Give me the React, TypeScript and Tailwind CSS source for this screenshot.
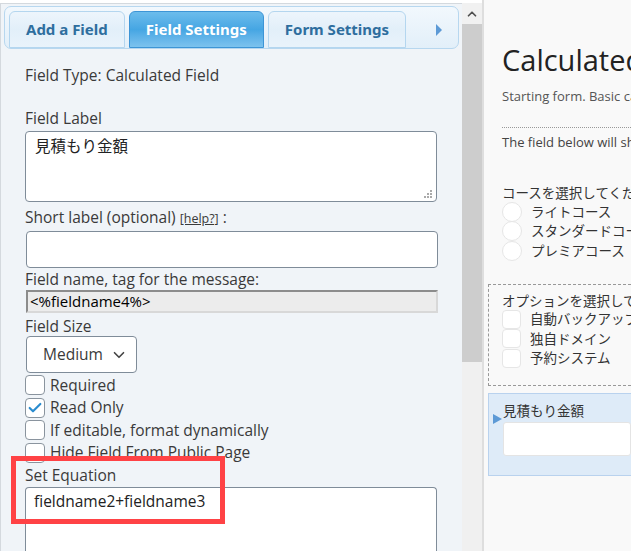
import { Check, ChevronDown, ChevronUp } from 'lucide-react';

const body = { fontFamily: '"Open Sans", "Noto Sans CJK JP", sans-serif' };

function CheckRow({ label, checked }: { label: string; checked?: boolean }) {
  return (
    <div className="flex h-[22.5px] items-center gap-[5px]">
      <span className="flex h-[20px] w-[20px] shrink-0 items-center justify-center rounded-[4px] border border-[#8a949e] bg-white">
        {checked && <Check className="h-[16px] w-[16px] text-[#2a8ccf]" strokeWidth={3.2} />}
      </span>
      <span className="text-[15.5px] text-[#3a3a3a]">{label}</span>
    </div>
  );
}

function Tab({ label, active }: { label: string; active?: boolean }) {
  return (
    <div
      className={
        active
          ? 'flex h-[37px] items-center justify-center rounded-t-[6px] border border-[#3d95d6] bg-gradient-to-b from-[#6cbcec] via-[#45a6e3] to-[#7cc2ee] px-[16px] text-[15px] font-bold text-white'
          : 'flex h-[37px] items-center justify-center rounded-t-[6px] border border-[#b4d6ef] bg-gradient-to-b from-[#edf5fc] via-[#e2eff9] to-[#e9f3fb] px-[16px] text-[15px] font-bold text-[#2e6e9e]'
      }
      style={{ fontFamily: '"Noto Sans", sans-serif' }}
    >
      {label}
    </div>
  );
}

function RightPanel() {
  return (
    <div className="flex-1 overflow-hidden bg-[#f9f9f9] pt-[41px]" style={body}>
      <div className="pl-[18px] whitespace-nowrap">
        <div className="text-[29px] leading-[38px] text-[#222]">Calculated Field</div>
        <div className="mt-[8px] text-[13px] leading-[18px] text-[#555]">Starting form. Basic calculation</div>
        <div className="mt-[22px] border-t border-dotted border-[#999]" />
        <div className="mt-[5px] text-[13px] leading-[18px] text-[#444]">The field below will show the total</div>
        <div className="mt-[33px] text-[13.5px] leading-[18px] text-[#333]">コースを選択してください</div>
        {['ライトコース', 'スタンダードコース', 'プレミアコース'].map((t) => (
          <div key={t} className="flex h-[19.5px] items-center gap-[9px]">
            <span className="h-[20px] w-[20px] shrink-0 rounded-full border border-[#e6e6e6] bg-white" />
            <span className="text-[13.5px] text-[#333]">{t}</span>
          </div>
        ))}
      </div>
      <div className="mt-[23px] ml-[4px] border border-dashed border-r-0 border-[#999] pb-[17px] pt-[7px] pl-[13px] whitespace-nowrap">
        <div className="text-[13.5px] leading-[18px] text-[#333]">オプションを選択してください</div>
        {['自動バックアップ', '独自ドメイン', '予約システム'].map((t) => (
          <div key={t} className="flex h-[19.5px] items-center gap-[9px]">
            <span className="h-[19px] w-[19px] shrink-0 rounded-[4px] border border-[#e6e6e6] bg-white" />
            <span className="text-[13.5px] text-[#333]">{t}</span>
          </div>
        ))}
      </div>
      <div className="relative mt-[7px] ml-[4px] h-[83px] border border-r-0 border-[#b9d2ee] bg-[#deebf8] pl-[14px] pt-[8px]">
        <span className="absolute left-[4px] top-[20px] h-0 w-0 border-y-[5px] border-l-[9px] border-y-transparent border-l-[#5d9ad6]" />
        <div className="text-[13.5px] leading-[18px] text-[#333]">見積もり金額</div>
        <div className="mt-[2px] h-[34px] rounded-[3px] border border-[#e4e4e4] bg-white" />
      </div>
    </div>
  );
}

export default function App() {
  return (
    <div className="flex h-[551px] w-[631px] overflow-hidden bg-white">
      <div className="w-[462px] pt-[3px]">
        <div className="h-full border-l border-t border-[#d4d9de] bg-[#f0f4f8]">
          <div className="mx-[3px] mt-[2px] h-[43px] rounded-[7px] border border-[#b7d7ef] bg-gradient-to-b from-[#f2f8fd] to-[#e2eff9] px-[4px] pt-[4px]">
            <div className="flex h-full items-end gap-[4px]">
              <Tab label="Add a Field" />
              <Tab label="Field Settings" active />
              <Tab label="Form Settings" />
              <div className="flex h-[37px] flex-1 items-center justify-end pr-[12px]">
                <span className="h-0 w-0 border-y-[6px] border-l-[6px] border-y-transparent border-l-[#5d9ad6]" />
              </div>
            </div>
          </div>

          <div className="pl-[24px] pr-[24px] text-[#3a3a3a]" style={body}>
            <div className="mt-[16px] text-[15.5px] leading-[20px]">Field Type: Calculated Field</div>

            <div className="mt-[23px] text-[15.5px] leading-[20px]">Field Label</div>
            <div className="relative mt-[3px] h-[71px] w-[412px] rounded-[4px] border border-[#7f8c99] bg-white px-[9px] pt-[3px] text-[15.5px] text-[#222]">
              見積もり金額
              <svg className="absolute bottom-[2px] right-[3px]" width="10" height="10" viewBox="0 0 10 10">
                <rect x="7" y="1" width="2" height="2" fill="#aaa" />
                <rect x="4" y="4" width="2" height="2" fill="#aaa" />
                <rect x="7" y="4" width="2" height="2" fill="#aaa" />
                <rect x="1" y="7" width="2" height="2" fill="#aaa" />
                <rect x="4" y="7" width="2" height="2" fill="#aaa" />
                <rect x="7" y="7" width="2" height="2" fill="#aaa" />
              </svg>
            </div>

            <div className="mt-[5px] text-[15.5px] leading-[20px]">
              Short label (optional) <span className="text-[12.5px] underline">[help?]</span> :
            </div>
            <div className="mt-[2px] ml-[1px] h-[37px] w-[412px] rounded-[4px] border border-[#7f8c99] bg-white" />

            <div className="mt-[1px] text-[15.5px] leading-[20px]">Field name, tag for the message:</div>
            <div className="mt-[1px] ml-[1px] flex h-[23px] w-[412px] items-center border-2 border-b-[#d8d8d8] border-l-[#8c8c8c] border-r-[#d8d8d8] border-t-[#8c8c8c] bg-[#ececec] px-[2px] text-[15px] text-black">
              &lt;%fieldname4%&gt;
            </div>

            <div className="mt-[3px] text-[15.5px] leading-[20px]">Field Size</div>
            <div className="ml-[1px] flex h-[37px] w-[111px] items-center justify-between rounded-[4px] border border-[#7f8c99] bg-white pl-[16px] pr-[8px] text-[15.5px] text-[#3a3a3a]">
              Medium
              <ChevronDown className="h-[18px] w-[18px] text-[#444]" strokeWidth={2.2} />
            </div>

            <div className="mt-[1px]">
              <CheckRow label="Required" />
              <CheckRow label="Read Only" checked />
              <CheckRow label="If editable, format dynamically" />
              <CheckRow label="Hide Field From Public Page" />
            </div>

            <div className="relative">
              <div className="mt-[1px] text-[15.5px] leading-[20px]">Set Equation</div>
              <div className="mt-[2px] h-[80px] w-[412px] rounded-t-[4px] border border-b-0 border-[#7f8c99] bg-white px-[8px] pt-[2px] text-[15.5px] text-[#222]">
                fieldname2+fieldname3
              </div>
              <div className="absolute left-[-14px] top-[-9px] h-[68px] w-[214px] border-[5px] border-[#ff4245]" />
            </div>
          </div>
        </div>
      </div>

      <div className="flex w-[20px] flex-col pt-[3px]">
        <div className="flex h-[21px] items-center justify-center bg-[#f1f1f1]">
          <ChevronUp className="h-[14px] w-[14px] text-[#505050]" strokeWidth={3} />
        </div>
        <div className="h-[338px] bg-[#cdcdcd]" />
        <div className="flex-1 bg-[#f0f0f0]" />
      </div>
      <div className="w-[2px] bg-[#dedede]" />

      <RightPanel />
    </div>
  );
}
